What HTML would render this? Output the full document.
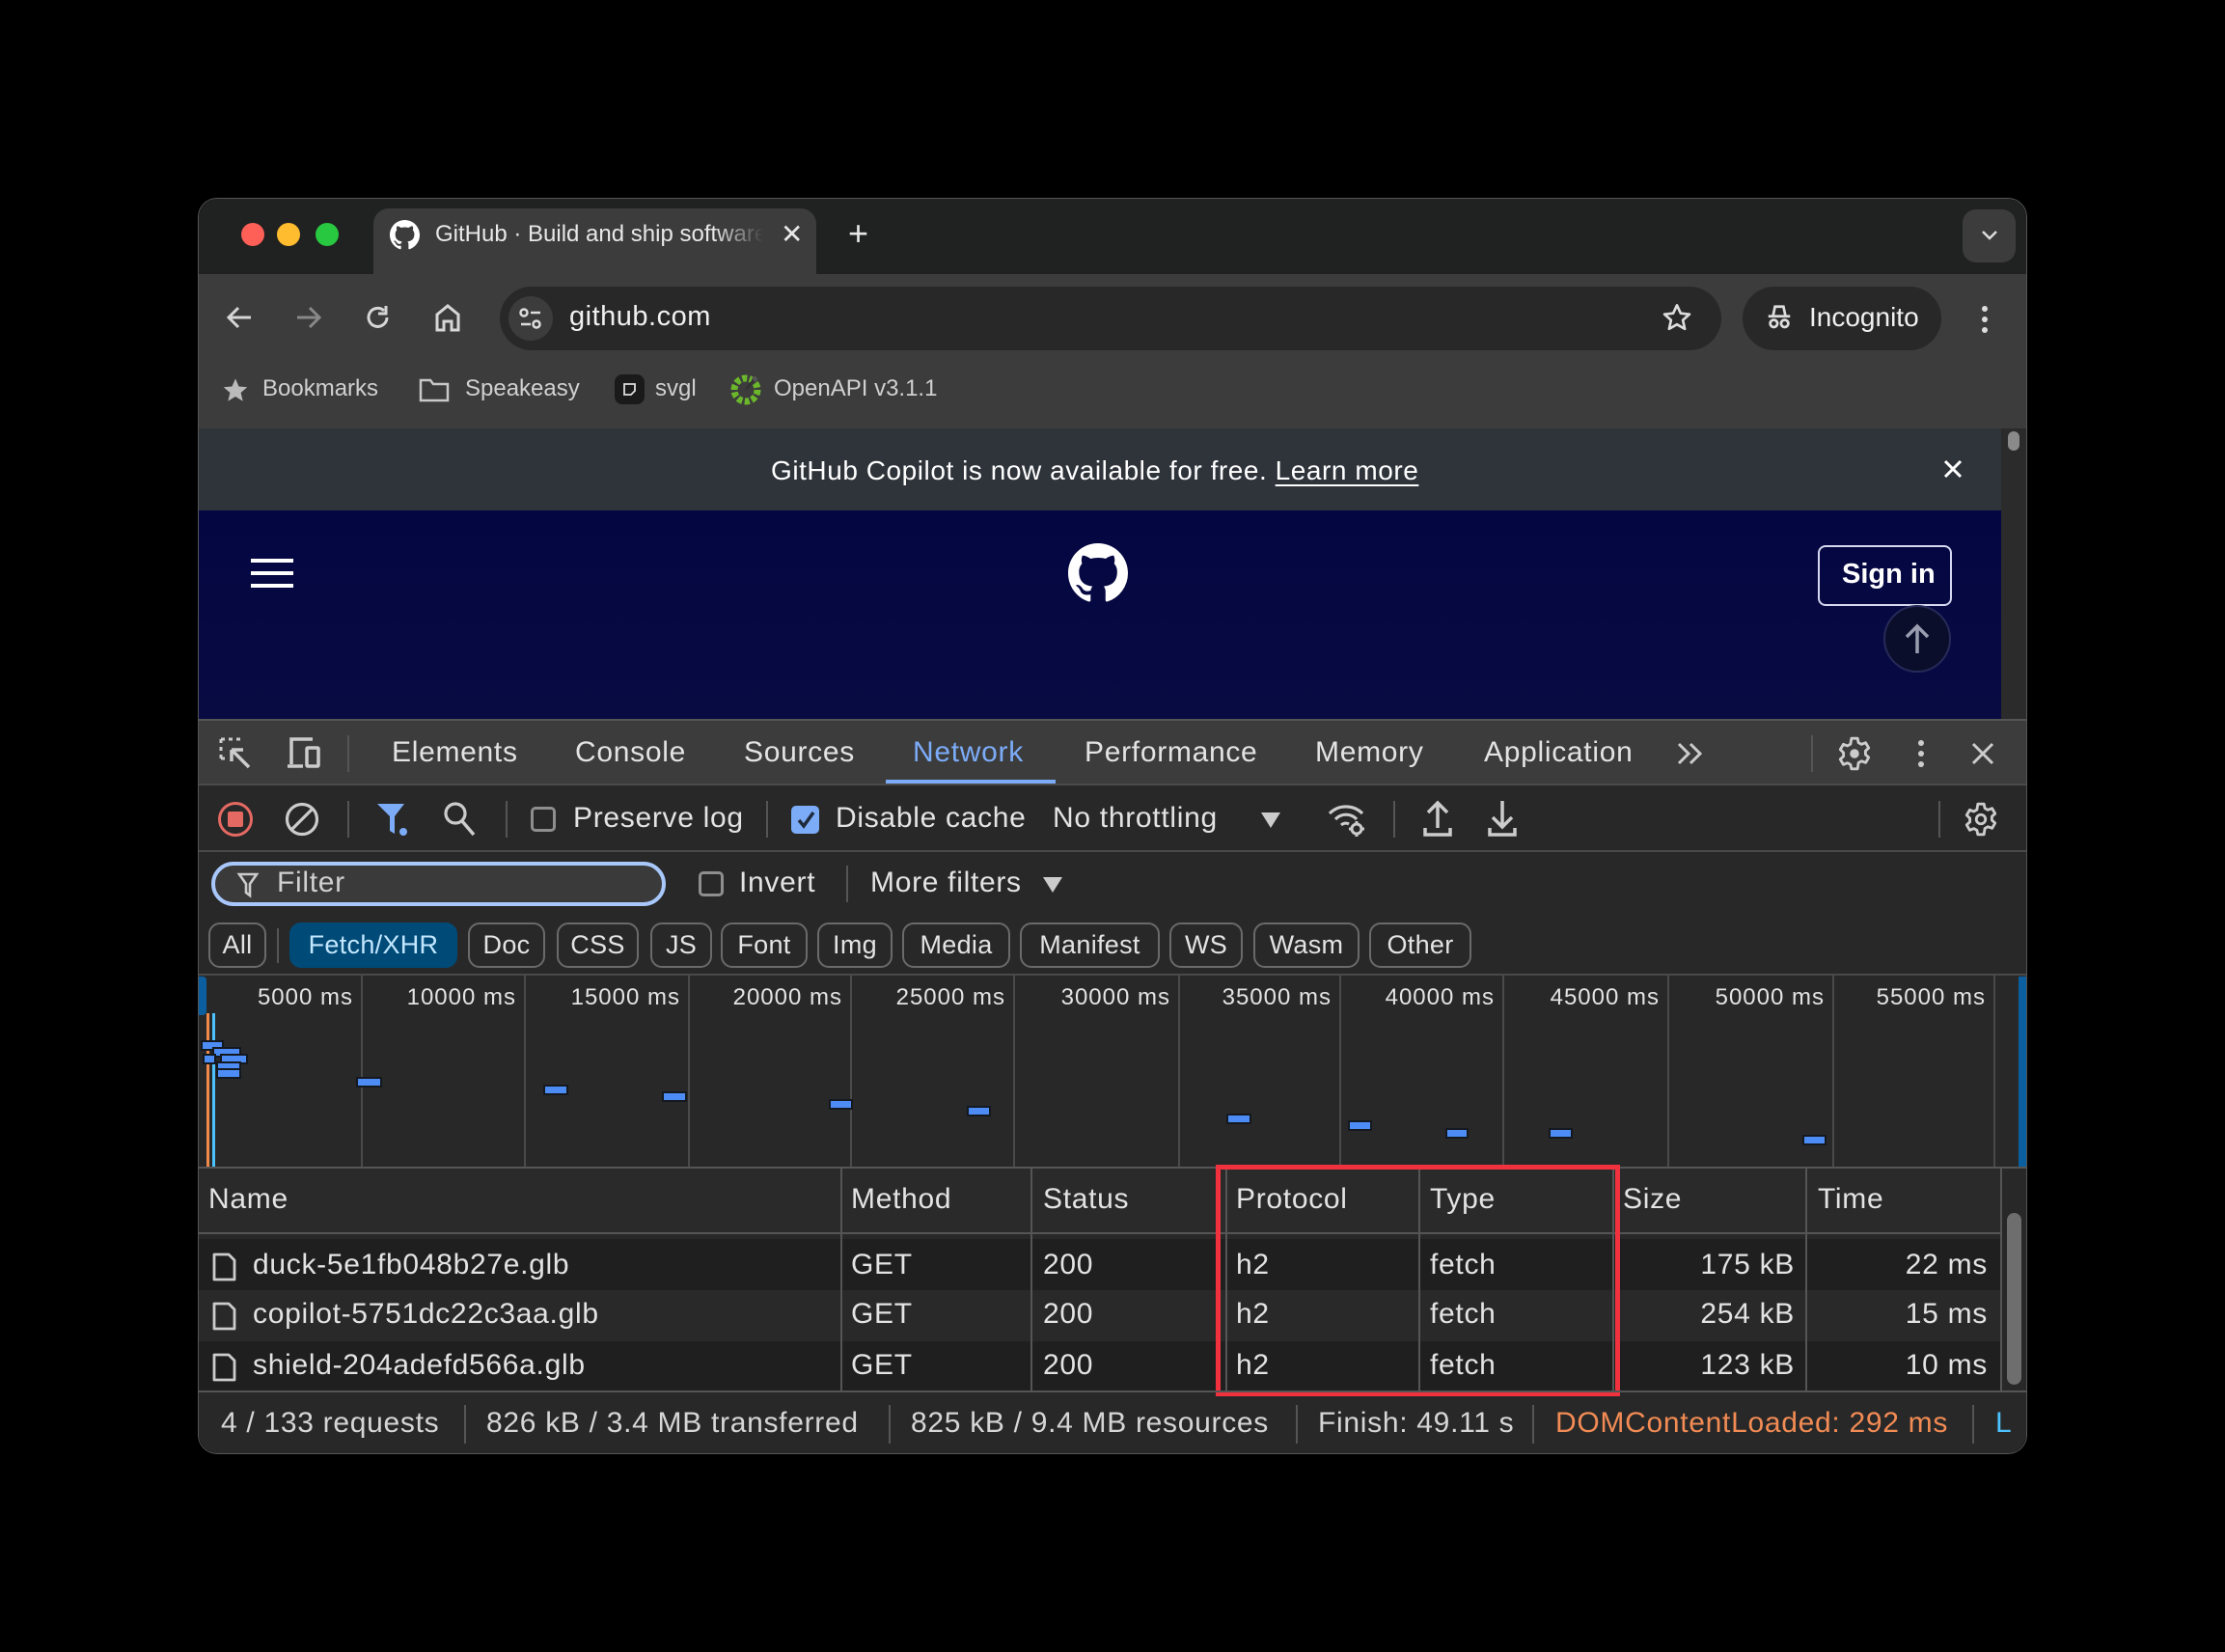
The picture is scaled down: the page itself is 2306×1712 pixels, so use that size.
<!DOCTYPE html>
<html><head><meta charset="utf-8"><style>
*{margin:0;padding:0;box-sizing:border-box}
body{width:2306px;height:1712px;background:#000;position:relative;overflow:hidden;font-family:"Liberation Sans",Arial,sans-serif;color:#e3e3e3}
.win{position:absolute;left:0;top:0;width:2306px;height:1712px;clip-path:inset(206px 206px 206px 206px round 20px)}
.a{position:absolute}
.t{position:absolute;white-space:nowrap;line-height:1}
.dt{font-size:30px;letter-spacing:0.7px;color:#e3e3e3;margin-top:-1px}
.tl{font-size:24px;letter-spacing:1px;color:#e3e3e3;top:1022px}
.vl{position:absolute;width:2px;background:#555}
.hl{position:absolute;height:2px;background:#4a4a4a}
.chip{position:absolute;top:956px;height:47px;border:2px solid #6a6a6a;border-radius:12px;font-size:27px;letter-spacing:0.3px;color:#e3e3e3;text-align:center;line-height:43px}
.bar{position:absolute;height:7px;background:#4d8cf5;outline:2px solid #14181f}
.cb{position:absolute;width:26px;height:26px;border:3px solid #8e8e8e;border-radius:5px}
svg{position:absolute;overflow:visible}
</style></head><body>
<div class="win">
<div class="a" style="left:206px;top:206px;width:1894px;height:78px;background:#202121"></div>
<div class="a" style="left:250px;top:231px;width:24px;height:24px;border-radius:50%;background:#fe5f57"></div>
<div class="a" style="left:287px;top:231px;width:24px;height:24px;border-radius:50%;background:#febc2e"></div>
<div class="a" style="left:327px;top:231px;width:24px;height:24px;border-radius:50%;background:#28c840"></div>
<div class="a" style="left:387px;top:216px;width:459px;height:80px;background:#3c3c3c;border-radius:16px 16px 0 0"></div>
<svg style="left:404px;top:228px" width="31" height="31" viewBox="0 0 16 16"><path fill="#fff" d="M8 0C3.58 0 0 3.58 0 8c0 3.54 2.290 6.53 5.47 7.59.4.07.55-.17.55-.38 0-.19-.01-.82-.01-1.49-2.01.37-2.53-.49-2.69-.94-.09-.23-.48-.94-.82-1.13-.28-.15-.68-.52-.01-.53.63-.01 1.08.58 1.23.82.72 1.21 1.87.87 2.33.66.07-.52.28-.87.51-1.07-1.78-.2-3.64-.89-3.64-3.95 0-.87.31-1.59.82-2.15-.08-.2-.36-1.02.08-2.12 0 0 .67-.21 2.2.82.64-.18 1.32-.27 2-.27.68 0 1.36.09 2 .27 1.53-1.04 2.2-.82 2.2-.82.44 1.1.16 1.92.08 2.12.51.56.82 1.27.82 2.15 0 3.07-1.87 3.75-3.65 3.95.29.25.54.73.54 1.48 0 1.07-.01 1.93-.01 2.2 0 .21.15.46.55.38A8.013 8.013 0 0016 8c0-4.42-3.58-8-8-8z"/></svg>
<div class="t" style="left:451px;top:231px;font-size:24px;color:#e8e8e8;width:340px;overflow:hidden;-webkit-mask-image:linear-gradient(90deg,#000 85%,transparent)">GitHub · Build and ship software</div>
<div class="t" style="left:809px;top:229px;font-size:28px;color:#e8e8e8">✕</div>
<div class="t" style="left:879px;top:224px;font-size:36px;color:#e8e8e8">+</div>
<div class="a" style="left:2034px;top:217px;width:55px;height:55px;border-radius:14px;background:#3c3c3c"></div>
<svg style="left:2053px;top:238px" width="18" height="12"><path d="M2 2l7 7 7-7" stroke="#ddd" stroke-width="2.5" fill="none"/></svg>
<div class="a" style="left:206px;top:284px;width:1894px;height:160px;background:#3c3c3c"></div>
<svg style="left:234px;top:316px" width="28" height="26"><path d="M26 13H4M13 3L3 13l10 10" stroke="#d6d6d6" stroke-width="3" fill="none"/></svg>
<svg style="left:306px;top:316px" width="28" height="26"><path d="M2 13h22M15 3l10 10-10 10" stroke="#888" stroke-width="3" fill="none"/></svg>
<svg style="left:378px;top:315px" width="28" height="28"><path d="M23 14a9.5 9.5 0 1 1-3-7" stroke="#d6d6d6" stroke-width="3" fill="none"/><path d="M22 2v8h-8" stroke="#d6d6d6" stroke-width="3" fill="none"/></svg>
<svg style="left:450px;top:314px" width="28" height="30"><path d="M3 28V12L14 3l11 9v16h-7v-9h-8v9z" stroke="#d6d6d6" stroke-width="3" fill="none"/></svg>
<div class="a" style="left:518px;top:297px;width:1266px;height:66px;border-radius:33px;background:#282828"></div>
<div class="a" style="left:527px;top:307px;width:46px;height:46px;border-radius:50%;background:#3c3c3c"></div>
<svg style="left:538px;top:318px" width="24" height="24"><circle cx="5" cy="6" r="3.5" stroke="#ddd" stroke-width="2.5" fill="none"/><path d="M12 6h10M2 18h10" stroke="#ddd" stroke-width="2.5"/><circle cx="18" cy="18" r="3.5" stroke="#ddd" stroke-width="2.5" fill="none"/></svg>
<div class="t" style="left:590px;top:314px;font-size:29px;letter-spacing:0.5px;color:#f0f0f0">github.com</div>
<svg style="left:1722px;top:313px" width="32" height="32" viewBox="0 0 24 24"><path d="M12 2.5l2.9 6.3 6.8.7-5.1 4.6 1.5 6.8L12 17.4l-6.1 3.5 1.5-6.8-5.1-4.6 6.8-.7z" stroke="#ddd" stroke-width="2" fill="none" stroke-linejoin="round"/></svg>
<div class="a" style="left:1806px;top:297px;width:206px;height:66px;border-radius:33px;background:#282828"></div>
<svg style="left:1829px;top:314px" width="30" height="30" viewBox="0 0 24 24"><path d="M7 10l1.5-7h7L17 10M3 11h18" stroke="#ddd" stroke-width="2.2" fill="none"/><circle cx="7.5" cy="17" r="3" stroke="#ddd" stroke-width="2.2" fill="none"/><circle cx="16.5" cy="17" r="3" stroke="#ddd" stroke-width="2.2" fill="none"/></svg>
<div class="t" style="left:1875px;top:315px;font-size:28px;color:#f0f0f0">Incognito</div>
<div class="a" style="left:2054px;top:317px;width:6px;height:6px;border-radius:50%;background:#ddd;box-shadow:0 11px 0 #ddd,0 22px 0 #ddd"></div>
<svg style="left:230px;top:390px" width="28" height="28" viewBox="0 0 24 24"><path d="M12 2l3 7 7.5.6-5.7 5 1.8 7.4L12 18l-6.6 4 1.8-7.4-5.7-5L9 9z" fill="#bbb"/></svg>
<div class="t" style="left:272px;top:391px;font-size:24px;color:#d0d0d0">Bookmarks</div>
<svg style="left:434px;top:391px" width="32" height="26"><path d="M2 3h10l3 4h15v17H2z" stroke="#c8c8c8" stroke-width="2.5" fill="none"/></svg>
<div class="t" style="left:482px;top:391px;font-size:24px;color:#d0d0d0">Speakeasy</div>
<div class="a" style="left:637px;top:388px;width:31px;height:31px;border-radius:8px;background:#1a1a1a"></div>
<svg style="left:645px;top:396px" width="15" height="15"><path d="M2 2h11v7l-4 4H2z" stroke="#ddd" stroke-width="1.8" fill="none"/></svg>
<div class="t" style="left:679px;top:391px;font-size:24px;color:#d0d0d0">svgl</div>
<svg style="left:758px;top:388px" width="30" height="30" viewBox="0 0 30 30"><circle cx="15" cy="16" r="12" fill="none" stroke="#6bb72b" stroke-width="7" stroke-dasharray="5 2.5"/><circle cx="24" cy="5" r="3" fill="#555"/><path d="M15 16L23 6" stroke="#333" stroke-width="3"/></svg>
<div class="t" style="left:802px;top:391px;font-size:24px;color:#d0d0d0">OpenAPI v3.1.1</div>
<div class="a" style="left:206px;top:444px;width:1868px;height:85px;background:#2f343b"></div>
<div class="t" style="left:799px;top:474px;font-size:28px;letter-spacing:0.55px;color:#fff">GitHub Copilot is now available for free. <span style="text-decoration:underline;text-underline-offset:5px">Learn more</span></div>
<svg style="left:2014px;top:476px" width="20" height="20"><path d="M2 2l16 16M18 2L2 18" stroke="#fff" stroke-width="3"/></svg>
<div class="a" style="left:206px;top:529px;width:1868px;height:217px;background:linear-gradient(#040642,#080b42)"></div>
<div class="a" style="left:260px;top:579px;width:44px;height:4px;background:#fff;box-shadow:0 13px 0 #fff,0 26px 0 #fff"></div>
<svg style="left:1107px;top:563px" width="62" height="62" viewBox="0 0 16 16"><path fill="#fff" d="M8 0C3.58 0 0 3.58 0 8c0 3.54 2.29 6.53 5.47 7.59.4.07.55-.17.55-.38 0-.19-.01-.82-.01-1.49-2.01.37-2.53-.49-2.69-.94-.09-.23-.48-.94-.82-1.13-.28-.15-.68-.52-.01-.53.63-.01 1.08.58 1.23.82.72 1.21 1.87.87 2.33.66.07-.52.28-.87.51-1.07-1.78-.2-3.64-.89-3.64-3.95 0-.87.31-1.59.82-2.15-.08-.2-.36-1.02.08-2.12 0 0 .67-.21 2.2.82.64-.18 1.32-.27 2-.27.68 0 1.36.09 2 .27 1.53-1.04 2.2-.82 2.2-.82.44 1.1.16 1.92.08 2.12.51.56.82 1.27.82 2.15 0 3.07-1.87 3.75-3.65 3.95.29.25.54.73.54 1.48 0 1.07-.01 1.93-.01 2.2 0 .21.15.46.55.38A8.013 8.013 0 0016 8c0-4.42-3.58-8-8-8z"/></svg>
<div class="a" style="left:1884px;top:565px;width:139px;height:63px;border:2px solid #d5d8ee;border-radius:8px"></div>
<div class="t" style="left:1909px;top:581px;font-size:29px;color:#fff;font-weight:600">Sign in</div>
<div class="a" style="left:1952px;top:627px;width:70px;height:70px;border-radius:50%;background:#0b0e2a;border:2px solid #262a58"></div>
<svg style="left:1973px;top:645px" width="28" height="34"><path d="M14 32V4M3 15L14 4l11 11" stroke="#9a9cb0" stroke-width="3.5" fill="none"/></svg>
<div class="a" style="left:2074px;top:444px;width:26px;height:302px;background:#2b2b2b"></div>
<div class="a" style="left:2081px;top:447px;width:12px;height:20px;border-radius:6px;background:#8a8a8a"></div>
<div class="a" style="left:206px;top:746px;width:1894px;height:67px;background:#3c3c3c"></div>
<div class="hl" style="left:206px;top:745px;width:1894px;background:#555"></div>
<svg style="left:226px;top:763px" width="38" height="38"><path d="M3 3h4M11 3h4M19 3h4M3 3v4M3 11v4M3 19v4M3 23h4" stroke="#ccc" stroke-width="3"/><path d="M14 14l18 18M14 14v12M14 14h12" stroke="#ccc" stroke-width="3.5" fill="none"/></svg>
<svg style="left:296px;top:762px" width="40" height="38"><path d="M6 30V4h22M2 32h16" stroke="#ccc" stroke-width="3.5" fill="none"/><rect x="22" y="13" width="12" height="19" rx="1" stroke="#ccc" stroke-width="3.5" fill="none"/></svg>
<div class="vl" style="left:360px;top:762px;height:38px"></div>
<div class="t dt" style="left:406px;top:766px">Elements</div>
<div class="t dt" style="left:596px;top:766px">Console</div>
<div class="t dt" style="left:771px;top:766px">Sources</div>
<div class="t dt" style="left:946px;top:766px;color:#7cacf8">Network</div>
<div class="a" style="left:918px;top:808px;width:176px;height:5px;background:#7cacf8"></div>
<div class="t dt" style="left:1124px;top:766px">Performance</div>
<div class="t dt" style="left:1363px;top:766px">Memory</div>
<div class="t dt" style="left:1538px;top:766px">Application</div>
<svg style="left:1737px;top:768px" width="30" height="26"><path d="M3 3l10 10-10 10M15 3l10 10-10 10" stroke="#ccc" stroke-width="3" fill="none"/></svg>
<div class="vl" style="left:1877px;top:762px;height:38px"></div>
<svg style="left:1903px;top:762px" width="38" height="38" viewBox="0 0 24 24"><path d="M10 2h4l.6 2.8 2 1.1 2.7-1 2 3.4-2.1 1.9v2.4l2.1 1.9-2 3.4-2.7-1-2 1.1L14 22h-4l-.6-2.8-2-1.1-2.7 1-2-3.4 2.1-1.9v-2.4L2.7 9.3l2-3.4 2.7 1 2-1.1z" stroke="#ccc" stroke-width="1.8" fill="none" stroke-linejoin="round"/><circle cx="12" cy="12" r="3" fill="#ccc"/></svg>
<div class="a" style="left:1988px;top:767px;width:6px;height:6px;border-radius:50%;background:#ccc;box-shadow:0 11px 0 #ccc,0 22px 0 #ccc"></div>
<svg style="left:2043px;top:769px" width="24" height="24"><path d="M2 2l20 20M22 2L2 22" stroke="#ccc" stroke-width="3"/></svg>
<div class="hl" style="left:206px;top:812px;width:1894px"></div>
<div class="a" style="left:206px;top:814px;width:1894px;height:692px;background:#282828"></div>
<div class="a" style="left:226px;top:831px;width:36px;height:36px;border-radius:50%;border:3.5px solid #e46962"></div>
<div class="a" style="left:236px;top:841px;width:16px;height:16px;border-radius:2px;background:#e46962"></div>
<svg style="left:295px;top:831px" width="36" height="36"><circle cx="18" cy="18" r="15.5" stroke="#ccc" stroke-width="3.2" fill="none"/><path d="M8 28L28 8" stroke="#ccc" stroke-width="3.2"/></svg>
<div class="vl" style="left:360px;top:830px;height:38px"></div>
<svg style="left:389px;top:831px" width="38" height="36"><path d="M2 2h28L20 15v18l-5-3V15z" fill="#7cacf8"/><circle cx="29" cy="31" r="4" fill="#7cacf8"/></svg>
<svg style="left:459px;top:830px" width="36" height="38"><circle cx="13" cy="13" r="10" stroke="#ccc" stroke-width="3.2" fill="none"/><path d="M20 21l12 14" stroke="#ccc" stroke-width="3.5"/></svg>
<div class="vl" style="left:524px;top:830px;height:38px"></div>
<div class="cb" style="left:550px;top:836px"></div>
<div class="t dt" style="left:594px;top:834px">Preserve log</div>
<div class="vl" style="left:794px;top:830px;height:38px"></div>
<div class="a" style="left:820px;top:835px;width:29px;height:29px;border-radius:5px;background:#7cacf8"></div>
<svg style="left:824px;top:839px" width="22" height="22"><path d="M4 11l5 6 10-14" stroke="#1f2a3a" stroke-width="3.5" fill="none"/></svg>
<div class="t dt" style="left:866px;top:834px">Disable cache</div>
<div class="t dt" style="left:1091px;top:834px">No throttling</div>
<svg style="left:1307px;top:842px" width="20" height="16"><path d="M0 0h20L10 16z" fill="#ccc"/></svg>
<svg style="left:1375px;top:829px" width="44" height="40"><path d="M3 14a24 24 0 0 1 34 0M9 20a15 15 0 0 1 22 0M15 26a7 7 0 0 1 8-1" stroke="#ccc" stroke-width="3.2" fill="none"/><circle cx="31" cy="30" r="5" stroke="#ccc" stroke-width="3" fill="none"/><path d="M31 22v3M31 35v3M23 30h3M36 30h3" stroke="#ccc" stroke-width="3"/></svg>
<div class="vl" style="left:1444px;top:830px;height:38px"></div>
<svg style="left:1474px;top:828px" width="32" height="40"><path d="M16 30V4M6 14L16 4l10 10M3 30v7h26v-7" stroke="#ccc" stroke-width="3.5" fill="none"/></svg>
<svg style="left:1541px;top:828px" width="32" height="40"><path d="M16 2v27M6 19l10 10 10-10M3 30v7h26v-7" stroke="#ccc" stroke-width="3.5" fill="none"/></svg>
<div class="vl" style="left:2009px;top:830px;height:38px"></div>
<svg style="left:2034px;top:830px" width="38" height="38" viewBox="0 0 24 24"><path d="M10 2h4l.6 2.8 2 1.1 2.7-1 2 3.4-2.1 1.9v2.4l2.1 1.9-2 3.4-2.7-1-2 1.1L14 22h-4l-.6-2.8-2-1.1-2.7 1-2-3.4 2.1-1.9v-2.4L2.7 9.3l2-3.4 2.7 1 2-1.1z" stroke="#ccc" stroke-width="1.8" fill="none" stroke-linejoin="round"/><circle cx="12" cy="12" r="3" stroke="#ccc" stroke-width="1.8" fill="none"/></svg>
<div class="hl" style="left:206px;top:881px;width:1894px"></div>
<div class="a" style="left:219px;top:893px;width:471px;height:46px;border-radius:23px;border:4px solid #a8c7fa;background:#3a3a3a"></div>
<svg style="left:246px;top:904px" width="22" height="26"><path d="M2 2h18l-7 10v12l-4-3v-9z" stroke="#ccc" stroke-width="2.6" fill="none"/></svg>
<div class="t dt" style="left:287px;top:901px;color:#d0d0d0">Filter</div>
<div class="cb" style="left:724px;top:903px"></div>
<div class="t dt" style="left:766px;top:901px">Invert</div>
<div class="vl" style="left:877px;top:897px;height:38px"></div>
<div class="t dt" style="left:902px;top:901px">More filters</div>
<svg style="left:1081px;top:909px" width="20" height="16"><path d="M0 0h20L10 16z" fill="#ccc"/></svg>
<div class="chip" style="left:216px;width:60px">All</div>
<div class="vl" style="left:287px;top:962px;height:36px"></div>
<div class="chip" style="left:300px;width:174px;background:#004a77;border-color:#004a77;color:#c2e7ff">Fetch/XHR</div>
<div class="chip" style="left:485px;width:80px">Doc</div>
<div class="chip" style="left:577px;width:85px">CSS</div>
<div class="chip" style="left:674px;width:64px">JS</div>
<div class="chip" style="left:747px;width:90px">Font</div>
<div class="chip" style="left:847px;width:78px">Img</div>
<div class="chip" style="left:935px;width:112px">Media</div>
<div class="chip" style="left:1057px;width:145px">Manifest</div>
<div class="chip" style="left:1212px;width:76px">WS</div>
<div class="chip" style="left:1299px;width:110px">Wasm</div>
<div class="chip" style="left:1419px;width:106px">Other</div>
<div class="hl" style="left:206px;top:1009px;width:1894px"></div>
<div class="vl" style="left:374px;top:1011px;height:199px;background:#4a4a4a"></div>
<div class="vl" style="left:543px;top:1011px;height:199px;background:#4a4a4a"></div>
<div class="vl" style="left:713px;top:1011px;height:199px;background:#4a4a4a"></div>
<div class="vl" style="left:881px;top:1011px;height:199px;background:#4a4a4a"></div>
<div class="vl" style="left:1050px;top:1011px;height:199px;background:#4a4a4a"></div>
<div class="vl" style="left:1221px;top:1011px;height:199px;background:#4a4a4a"></div>
<div class="vl" style="left:1388px;top:1011px;height:199px;background:#4a4a4a"></div>
<div class="vl" style="left:1557px;top:1011px;height:199px;background:#4a4a4a"></div>
<div class="vl" style="left:1728px;top:1011px;height:199px;background:#4a4a4a"></div>
<div class="vl" style="left:1899px;top:1011px;height:199px;background:#4a4a4a"></div>
<div class="vl" style="left:2066px;top:1011px;height:199px;background:#4a4a4a"></div>
<div class="t tl" style="right:1940px">5000 ms</div>
<div class="t tl" style="right:1771px">10000 ms</div>
<div class="t tl" style="right:1601px">15000 ms</div>
<div class="t tl" style="right:1433px">20000 ms</div>
<div class="t tl" style="right:1264px">25000 ms</div>
<div class="t tl" style="right:1093px">30000 ms</div>
<div class="t tl" style="right:926px">35000 ms</div>
<div class="t tl" style="right:757px">40000 ms</div>
<div class="t tl" style="right:586px">45000 ms</div>
<div class="t tl" style="right:415px">50000 ms</div>
<div class="t tl" style="right:248px">55000 ms</div>
<div class="a" style="left:206px;top:1012px;width:8px;height:40px;background:#0b5fa0;border-radius:0 4px 4px 0"></div>
<div class="a" style="left:2092px;top:1012px;width:8px;height:198px;background:#0b5fa0"></div>
<div class="a" style="left:214px;top:1050px;width:3px;height:160px;background:#f08a4b"></div>
<div class="a" style="left:220px;top:1050px;width:3px;height:160px;background:#4cc2ff"></div>
<div class="bar" style="left:210px;top:1080px;width:20px"></div>
<div class="bar" style="left:222px;top:1087px;width:26px"></div>
<div class="bar" style="left:212px;top:1094px;width:10px"></div>
<div class="bar" style="left:230px;top:1094px;width:25px"></div>
<div class="bar" style="left:226px;top:1102px;width:22px"></div>
<div class="bar" style="left:226px;top:1109px;width:22px"></div>
<div class="bar" style="left:371px;top:1118px;width:23px"></div>
<div class="bar" style="left:565px;top:1126px;width:22px"></div>
<div class="bar" style="left:688px;top:1133px;width:22px"></div>
<div class="bar" style="left:861px;top:1141px;width:21px"></div>
<div class="bar" style="left:1004px;top:1148px;width:21px"></div>
<div class="bar" style="left:1273px;top:1156px;width:22px"></div>
<div class="bar" style="left:1399px;top:1163px;width:21px"></div>
<div class="bar" style="left:1500px;top:1171px;width:20px"></div>
<div class="bar" style="left:1607px;top:1171px;width:21px"></div>
<div class="bar" style="left:1870px;top:1178px;width:21px"></div>
<div class="hl" style="left:206px;top:1209px;width:1894px;background:#555"></div>
<div class="a" style="left:206px;top:1211px;width:1868px;height:67px;background:#2a2a2b"></div>
<div class="hl" style="left:206px;top:1277px;width:1868px;background:#555"></div>
<div class="a" style="left:206px;top:1284px;width:1868px;height:53px;background:#1f1f1f"></div>
<div class="a" style="left:206px;top:1337px;width:1868px;height:53px;background:#292929"></div>
<div class="a" style="left:206px;top:1390px;width:1868px;height:51px;background:#1f1f1f"></div>
<div class="vl" style="left:871px;top:1211px;height:230px"></div>
<div class="vl" style="left:1068px;top:1211px;height:230px"></div>
<div class="vl" style="left:1270px;top:1211px;height:230px"></div>
<div class="vl" style="left:1470px;top:1211px;height:230px"></div>
<div class="vl" style="left:1671px;top:1211px;height:230px"></div>
<div class="vl" style="left:1871px;top:1211px;height:230px"></div>
<div class="vl" style="left:2073px;top:1211px;height:230px"></div>
<div class="t dt" style="left:216px;top:1229px">Name</div>
<div class="t dt" style="left:882px;top:1229px">Method</div>
<div class="t dt" style="left:1081px;top:1229px">Status</div>
<div class="t dt" style="left:1281px;top:1229px">Protocol</div>
<div class="t dt" style="left:1482px;top:1229px">Type</div>
<div class="t dt" style="left:1682px;top:1229px">Size</div>
<div class="t dt" style="left:1884px;top:1229px">Time</div>
<svg style="left:219px;top:1298px" width="28" height="30"><path d="M3 2h15l6 6v20H3z" stroke="#ccc" stroke-width="2.8" fill="none" stroke-linejoin="round"/></svg>
<svg style="left:219px;top:1349px" width="28" height="30"><path d="M3 2h15l6 6v20H3z" stroke="#ccc" stroke-width="2.8" fill="none" stroke-linejoin="round"/></svg>
<svg style="left:219px;top:1402px" width="28" height="30"><path d="M3 2h15l6 6v20H3z" stroke="#ccc" stroke-width="2.8" fill="none" stroke-linejoin="round"/></svg>
<div class="t dt" style="left:262px;top:1297px">duck-5e1fb048b27e.glb</div>
<div class="t dt" style="left:262px;top:1348px">copilot-5751dc22c3aa.glb</div>
<div class="t dt" style="left:262px;top:1401px">shield-204adefd566a.glb</div>
<div class="t dt" style="left:882px;top:1297px">GET</div><div class="t dt" style="left:882px;top:1348px">GET</div><div class="t dt" style="left:882px;top:1401px">GET</div>
<div class="t dt" style="left:1081px;top:1297px">200</div><div class="t dt" style="left:1081px;top:1348px">200</div><div class="t dt" style="left:1081px;top:1401px">200</div>
<div class="t dt" style="left:1281px;top:1297px">h2</div><div class="t dt" style="left:1281px;top:1348px">h2</div><div class="t dt" style="left:1281px;top:1401px">h2</div>
<div class="t dt" style="left:1482px;top:1297px">fetch</div><div class="t dt" style="left:1482px;top:1348px">fetch</div><div class="t dt" style="left:1482px;top:1401px">fetch</div>
<div class="t dt" style="right:446px;top:1297px">175 kB</div><div class="t dt" style="right:446px;top:1348px">254 kB</div><div class="t dt" style="right:446px;top:1401px">123 kB</div>
<div class="t dt" style="right:246px;top:1297px">22 ms</div><div class="t dt" style="right:246px;top:1348px">15 ms</div><div class="t dt" style="right:246px;top:1401px">10 ms</div>
<div class="a" style="left:2080px;top:1257px;width:15px;height:178px;border-radius:8px;background:#6e6e6e"></div>
<div class="a" style="left:1260px;top:1207px;width:419px;height:240px;border:5px solid #f2313f"></div>
<div class="hl" style="left:206px;top:1441px;width:1894px;background:#555"></div>
<div class="t dt" style="left:229px;top:1461px;color:#d6d6d6">4 / 133 requests</div>
<div class="vl" style="left:481px;top:1456px;height:40px"></div>
<div class="t dt" style="left:504px;top:1461px;color:#d6d6d6">826 kB / 3.4 MB transferred</div>
<div class="vl" style="left:921px;top:1456px;height:40px"></div>
<div class="t dt" style="left:944px;top:1461px;color:#d6d6d6">825 kB / 9.4 MB resources</div>
<div class="vl" style="left:1343px;top:1456px;height:40px"></div>
<div class="t dt" style="left:1366px;top:1461px;color:#d6d6d6">Finish: 49.11 s</div>
<div class="vl" style="left:1588px;top:1456px;height:40px"></div>
<div class="t dt" style="left:1612px;top:1461px;color:#f28b54">DOMContentLoaded: 292 ms</div>
<div class="vl" style="left:2044px;top:1456px;height:40px"></div>
<div class="t dt" style="left:2068px;top:1461px;color:#4cc2ff">L</div>
</div>
<div class="a" style="left:205px;top:205px;width:1896px;height:1302px;border:1.5px solid #555;border-radius:20px"></div>
</body></html>
